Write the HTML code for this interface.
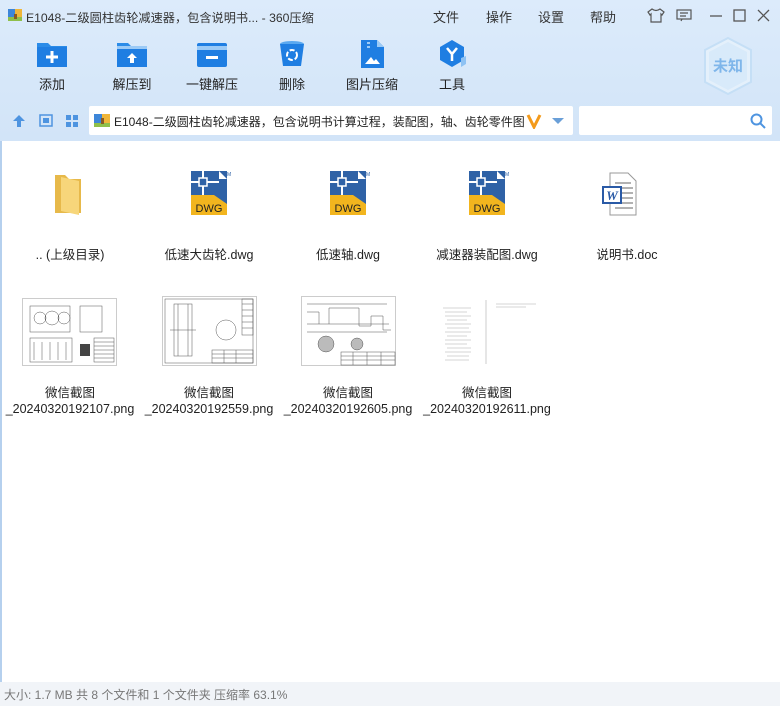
<!DOCTYPE html>
<html><head><meta charset="utf-8"><style>
*{margin:0;padding:0;box-sizing:border-box}
body{width:780px;height:706px;overflow:hidden;font-family:"Liberation Sans","Noto Sans CJK SC",sans-serif;background:#fff;position:relative;font-size:12px;color:#222}
.top{position:absolute;left:0;top:0;width:780px;height:141px;background:linear-gradient(180deg,#dcebfb 0%,#d6e7f9 60%,#d2e4f8 100%)}
.abs{position:absolute}
.title{left:26px;top:8px;font-size:12.2px;color:#333}
.menu{top:7px;font-size:13px;color:#333}
.tb{position:absolute;top:40px;width:70px;text-align:center;font-size:13px;color:#222}
.tb svg{display:block;margin:0 auto 6px}
.addr{left:89px;top:106px;width:484px;height:29px;background:#fff;border-radius:2px}
.search{left:579px;top:106px;width:193px;height:29px;background:#fff;border-radius:2px}
.content{left:0;top:141px;width:780px;height:541px;background:#fff;border-left:2px solid #b5d0ee}
.status{left:0;top:682px;width:780px;height:24px;background:#f1f4f8;color:#777;font-size:12px;padding:4px 0 0 4px}
.lbl{position:absolute;width:140px;text-align:center;font-size:12.5px;color:#222;line-height:16px}
</style></head><body>
<div class="top"></div>
<svg class="abs" style="left:8px;top:8px" width="14" height="14"><rect x="0" y="1" width="14" height="12" fill="#3d86d9"/><rect x="7" y="1" width="7" height="12" fill="#f0b63a"/><rect x="0" y="9" width="14" height="4" fill="#8fbf4a"/><rect x="6" y="6" width="3" height="5" fill="#8a5a20"/></svg>
<div class="abs title">E1048-二级圆柱齿轮减速器，包含说明书... - 360压缩</div>
<div class="abs menu" style="left:433px">文件</div>
<div class="abs menu" style="left:486px">操作</div>
<div class="abs menu" style="left:538px">设置</div>
<div class="abs menu" style="left:590px">帮助</div>
<svg class="abs" style="left:647px;top:8px" width="18" height="15" fill="none" stroke="#555" stroke-width="1.2"><path d="M5 1 L1 4 L3 7 L4 6 L4 14 L14 14 L14 6 L15 7 L17 4 L13 1 Q9 4 5 1Z"/></svg>
<svg class="abs" style="left:676px;top:9px" width="16" height="13" fill="none" stroke="#555" stroke-width="1.2"><rect x="1" y="1" width="14" height="9"/><path d="M4 4h8M4 7h6M6 10l-1 2"/></svg>
<svg class="abs" style="left:708px;top:9px" width="70" height="14" fill="none" stroke="#555" stroke-width="1.3"><path d="M2 7h12"/><rect x="26" y="1" width="11" height="11"/><path d="M50 1l11 11M61 1l-11 11"/></svg>

<div class="tb" style="left:17px"><svg width="32" height="28"><path d="M1 3h11l3 3h16v21H1z" fill="#2b8ce8"/><rect x="1" y="7" width="30" height="20" rx="1" fill="#1f7ee2"/><path d="M16 11v12M10 17h12" stroke="#fff" stroke-width="3"/></svg>添加</div>
<div class="tb" style="left:97px"><svg width="32" height="28"><path d="M1 3h11l3 3h16v21H1z" fill="#2b8ce8"/><rect x="1" y="6" width="30" height="3" fill="#9bcaf6"/><rect x="1" y="9" width="30" height="18" fill="#1f7ee2"/><path d="M16 13l-5 5h3v5h4v-5h3z" fill="#fff"/></svg>解压到</div>
<div class="tb" style="left:177px"><svg width="32" height="28"><rect x="1" y="3" width="30" height="24" rx="2" fill="#1f7ee2"/><rect x="1" y="6" width="30" height="4" fill="#9bcaf6"/><rect x="10" y="16" width="12" height="3" fill="#fff"/></svg>一键解压</div>
<div class="tb" style="left:257px"><svg width="32" height="28"><ellipse cx="16" cy="4" rx="12" ry="3" fill="#59a8f0"/><path d="M4 4h24l-3 22H7z" fill="#1f7ee2"/><circle cx="16" cy="15" r="5" fill="none" stroke="#fff" stroke-width="2" stroke-dasharray="5 2"/></svg>删除</div>
<div class="tb" style="left:337px"><svg width="32" height="28"><path d="M5 0h16l7 7v21H5z" fill="#1f7ee2"/><path d="M21 0v7h7" fill="#9bcaf6"/><rect x="11" y="2" width="3" height="2" fill="#9bcaf6"/><rect x="11" y="6" width="3" height="2" fill="#9bcaf6"/><path d="M9 24l6-7 3 4 2-2 4 5z" fill="#fff"/></svg>图片压缩</div>
<div class="tb" style="left:417px"><svg width="32" height="28"><path d="M16 0l12 7v13l-12 7-12-7V7z" fill="#1f7ee2"/><path d="M25 18l5-2v8l-5 3z" fill="#8ec2f3"/><path d="M11 8l5 6 5-6M16 14v7" stroke="#fff" stroke-width="2.5" fill="none"/></svg>工具</div>

<svg class="abs" style="left:703px;top:37px" width="50" height="58"><path d="M25 1l23 12v32L25 57 2 45V13z" fill="#e4f0fb" stroke="#c5dff6" stroke-width="2"/><path d="M25 5l19 10v28L25 53 6 43V15z" fill="#d8eafa"/><text x="25" y="34" font-size="15" font-weight="bold" fill="#7fb6ea" text-anchor="middle" font-family="Noto Sans CJK SC">未知</text></svg>

<svg class="abs" style="left:12px;top:114px" width="70" height="14"><path d="M7 1l6 6H9v6H5V7H1z" fill="#4e94e0"/><rect x="28" y="1" width="12" height="11" fill="none" stroke="#4e94e0" stroke-width="1.5"/><rect x="31" y="4" width="6" height="5" fill="#4e94e0"/><rect x="54" y="1" width="5" height="5" fill="#4e94e0"/><rect x="61" y="1" width="5" height="5" fill="#4e94e0"/><rect x="54" y="8" width="5" height="5" fill="#4e94e0"/><rect x="61" y="8" width="5" height="5" fill="#4e94e0"/></svg>
<div class="abs addr"></div>
<svg class="abs" style="left:94px;top:113px" width="16" height="15"><rect x="0" y="1" width="16" height="13" fill="#3d86d9"/><rect x="8" y="1" width="8" height="13" fill="#f0b63a"/><rect x="0" y="10" width="16" height="4" fill="#8fbf4a"/><rect x="7" y="5" width="3" height="6" fill="#8a5a20"/></svg>
<div class="abs" style="left:114px;top:113px;font-size:12px;color:#222;white-space:nowrap">E1048-二级圆柱齿轮减速器，包含说明书计算过程，装配图，轴、齿轮零件图</div>
<svg class="abs" style="left:526px;top:113px" width="16" height="16"><path d="M2 2l6 12 6-12" stroke="#f39a1b" stroke-width="3" fill="none"/></svg>
<svg class="abs" style="left:552px;top:118px" width="12" height="7"><path d="M0 0h12L6 6z" fill="#6a9fd8"/></svg>
<div class="abs search"></div>
<svg class="abs" style="left:750px;top:113px" width="16" height="16" fill="none" stroke="#4e94e0" stroke-width="2"><circle cx="6.5" cy="6.5" r="5"/><path d="M10 10l5 5"/></svg>

<div class="abs content"></div>

<svg class="abs" style="left:53px;top:173px" width="30" height="44"><path d="M2 2h10l4 4h12v34H2z" fill="#e7b94a"/><path d="M8 4l18 4v34L8 38z" fill="#f7d67a"/></svg>
<div class="lbl" style="left:0;top:247px">.. (上级目录)</div>

<svg width="0" height="0" style="position:absolute"><defs><g id="dwg"><rect x="0" y="0" width="36" height="44" fill="#2f62a6"/><path d="M28 0l8 8H28z" fill="#fff"/><path d="M0 24h36v20H0z" fill="#f2b51e"/><path d="M0 24h36v9L23 24z" fill="#2f62a6"/><path d="M12 0v24M0 11h28" stroke="#fff" stroke-width="2"/><rect x="8" y="7" width="8" height="8" fill="#2f62a6" stroke="#fff" stroke-width="1.5"/><text x="18" y="41" font-size="11" font-family="Liberation Sans" fill="#222" text-anchor="middle">DWG</text><text x="33" y="5" font-size="5" fill="#2f62a6">TM</text></g></defs></svg>
<svg class="abs" style="left:191px;top:171px" width="44" height="46"><use href="#dwg"/></svg>
<svg class="abs" style="left:330px;top:171px" width="44" height="46"><use href="#dwg"/></svg>
<svg class="abs" style="left:469px;top:171px" width="44" height="46"><use href="#dwg"/></svg>
<svg class="abs" style="left:601px;top:171px" width="44" height="46"><path d="M9 2h18l8 8v34H9z" fill="#fff" stroke="#999"/><path d="M14 12h16M14 17h18M14 22h18M14 27h18M14 32h18M14 37h18" stroke="#999" stroke-width="1.5"/><rect x="1" y="15" width="20" height="18" fill="#2a5aa6"/><rect x="3" y="17" width="16" height="14" fill="#fff"/><text x="11" y="29" font-size="13" font-weight="bold" font-style="italic" fill="#2a5aa6" text-anchor="middle" font-family="Liberation Serif">W</text></svg>
<div class="lbl" style="left:139px;top:247px">低速大齿轮.dwg</div>
<div class="lbl" style="left:278px;top:247px">低速轴.dwg</div>
<div class="lbl" style="left:417px;top:247px">减速器装配图.dwg</div>
<div class="lbl" style="left:557px;top:247px">说明书.doc</div>

<svg class="abs" style="left:22px;top:298px" width="95" height="68"><rect x=".5" y=".5" width="94" height="67" fill="#fff" stroke="#ccc"/><g stroke="#555" stroke-width=".5" fill="none"><rect x="8" y="8" width="40" height="26"/><circle cx="18" cy="20" r="6"/><circle cx="30" cy="20" r="7"/><circle cx="42" cy="20" r="6"/><rect x="58" y="8" width="22" height="26"/><rect x="8" y="40" width="42" height="24"/><path d="M12 44v18M20 44v18M28 44v18M36 44v18M44 44v18"/><rect x="72" y="40" width="20" height="24"/><path d="M72 44h20M72 48h20M72 52h20M72 56h20M72 60h20"/></g><rect x="58" y="46" width="10" height="12" fill="#444"/></svg>
<svg class="abs" style="left:162px;top:296px" width="95" height="70"><rect x=".5" y=".5" width="94" height="69" fill="#fff" stroke="#ccc"/><g stroke="#555" stroke-width=".5" fill="none"><rect x="3" y="3" width="88" height="64"/><rect x="12" y="8" width="18" height="52"/><path d="M16 8v52M26 8v52M8 34h26"/><circle cx="64" cy="34" r="10"/><rect x="80" y="3" width="11" height="36"/><path d="M80 8h11M80 14h11M80 20h11M80 26h11M80 32h11"/><rect x="50" y="54" width="41" height="13"/><path d="M50 58h41M50 62h41M62 54v13M74 54v13"/></g></svg>
<svg class="abs" style="left:301px;top:296px" width="95" height="70"><rect x=".5" y=".5" width="94" height="69" fill="#fff" stroke="#ccc"/><g stroke="#555" stroke-width=".5" fill="none"><path d="M6 16h12v12h10V12h30v18h12v-10h12v14h8"/><path d="M6 28h12M28 28h60"/><path d="M6 8h80M6 36h80"/><circle cx="25" cy="48" r="8" fill="#bbb"/><circle cx="56" cy="48" r="6" fill="#bbb"/><rect x="40" y="56" width="54" height="13"/><path d="M40 60h54M40 64h54M52 56v13M66 56v13M80 56v13"/></g></svg>
<svg class="abs" style="left:441px;top:298px" width="95" height="68"><rect x="0" y="0" width="95" height="68" fill="#fff"/><g stroke="#aaa" stroke-width=".6"><path d="M2 10h28M4 14h22M4 18h26M6 22h20M4 26h26M6 30h22M4 34h26M6 38h20M4 42h26M4 46h22M6 50h24M4 54h26M6 58h22M4 62h24"/><path d="M45 2v64"/><path d="M55 6h40M55 9h30"/></g></svg>
<div class="lbl" style="left:0;top:385px">微信截图<br>_20240320192107.png</div>
<div class="lbl" style="left:139px;top:385px">微信截图<br>_20240320192559.png</div>
<div class="lbl" style="left:278px;top:385px">微信截图<br>_20240320192605.png</div>
<div class="lbl" style="left:417px;top:385px">微信截图<br>_20240320192611.png</div>

<div class="abs status">大小: 1.7 MB 共 8 个文件和 1 个文件夹 压缩率 63.1%</div>
</body></html>
